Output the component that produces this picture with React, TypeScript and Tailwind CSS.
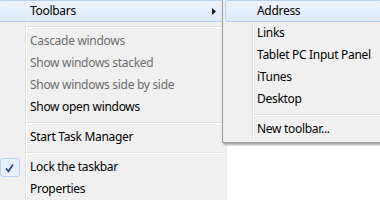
import React from 'react';

type Item =
  | { kind: 'item'; label: string; disabled?: boolean; active?: boolean; arrow?: boolean; checked?: boolean }
  | { kind: 'sep' };

const MAIN: Item[] = [
  { kind: 'item', label: 'Toolbars', active: true, arrow: true },
  { kind: 'sep' },
  { kind: 'item', label: 'Cascade windows', disabled: true },
  { kind: 'item', label: 'Show windows stacked', disabled: true },
  { kind: 'item', label: 'Show windows side by side', disabled: true },
  { kind: 'item', label: 'Show open windows' },
  { kind: 'sep' },
  { kind: 'item', label: 'Start Task Manager' },
  { kind: 'sep' },
  { kind: 'item', label: 'Lock the taskbar', checked: true },
  { kind: 'item', label: 'Properties' },
];

const SUB: Item[] = [
  { kind: 'item', label: 'Address', active: true },
  { kind: 'item', label: 'Links' },
  { kind: 'item', label: 'Tablet PC Input Panel' },
  { kind: 'item', label: 'iTunes' },
  { kind: 'item', label: 'Desktop' },
  { kind: 'sep' },
  { kind: 'item', label: 'New toolbar...' },
];

const font = "font-['Noto_Sans','Liberation_Sans',sans-serif]";

// Win7-style row; text offset differs between the two menus
const renderRow = (it: Item, i: number, textPad: string, sepPad: string) => {
  if (it.kind === 'sep') {
    return (
      <div key={i} className={`h-[8px] pt-[4px] ${sepPad}`}>
        <div className="h-px bg-[#e0e0e0]" />
        <div className="h-px bg-white" />
      </div>
    );
  }
  const activeCls = it.active
    ? 'border border-[#b4d0f3] rounded-[3px] bg-[linear-gradient(to_bottom,rgba(235,243,253,0.85),rgba(220,233,250,0.85))]'
    : 'border border-transparent';
  return (
    <div key={i} className={`relative h-[22px] flex items-center justify-between ${activeCls}`}>
      {it.checked && (
        <div className="absolute left-[1px] top-[1px] w-[20px] h-[19px] rounded-[3px] border border-[#b4d0f3] bg-[#e8f0fb] flex items-center justify-center">
          <svg width="14" height="12" viewBox="0 0 14 12">
            <path d="M3 6.5 L5.5 9.5 L10 2.5" fill="none" stroke="#1d3a8a" strokeWidth="1.6" />
          </svg>
        </div>
      )}
      <span
        className={`${textPad} text-[12px] tracking-[-0.3px] leading-none whitespace-nowrap ${it.disabled ? 'text-[#6d6d6d]' : 'text-black'}`}
      >
        {it.label}
      </span>
      {it.arrow && (
        <svg width="4" height="7" viewBox="0 0 4 7" className="mr-[10px]">
          <path d="M0 0 L4 3.5 L0 7 Z" fill="#1a1a1a" />
        </svg>
      )}
    </div>
  );
};

export default function App() {
  return (
    <div className={`relative w-[380px] h-[200px] overflow-hidden bg-white ${font}`}>
      {/* main context menu */}
      <div className="-ml-[2px] w-[229px] h-[200px] flex flex-col bg-[#f0f0f0] bg-[linear-gradient(to_right,transparent_27px,#e2e3e3_27px,#e2e3e3_28px,#ffffff_28px,#ffffff_29px,transparent_29px)]">
        {MAIN.map((it, i) => renderRow(it, i, 'pl-[31px]', 'pl-[28px] pr-[2px]'))}
      </div>

      {/* Toolbars submenu */}
      <div className="absolute left-[222px] top-[-3px] w-[200px] border border-[#979797] bg-[#f0f0f0] p-[2px] shadow-[2px_2px_2px_rgba(0,0,0,0.35)]">
        <div className="flex flex-col bg-[linear-gradient(to_right,transparent_27px,#e2e3e3_27px,#e2e3e3_28px,#ffffff_28px,#ffffff_29px,transparent_29px)]">
          {SUB.map((it, i) => renderRow(it, i, 'pl-[31px]', 'pl-[29px]'))}
        </div>
      </div>
    </div>
  );
}
